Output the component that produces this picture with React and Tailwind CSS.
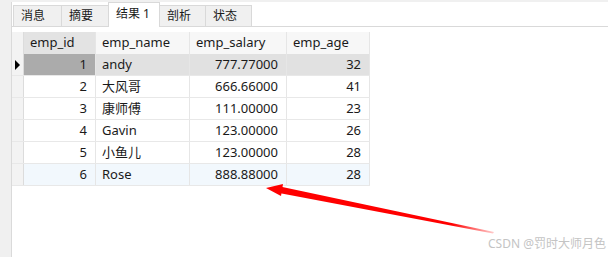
import React from "react";

const rows = [
  { id: 1, name: "andy", salary: "777.77000", age: 32 },
  { id: 2, name: "大风哥", salary: "666.66000", age: 41 },
  { id: 3, name: "康师傅", salary: "111.00000", age: 23 },
  { id: 4, name: "Gavin", salary: "123.00000", age: 26 },
  { id: 5, name: "小鱼儿", salary: "123.00000", age: 28 },
  { id: 6, name: "Rose", salary: "888.88000", age: 28 },
];

const tabs = [
  { label: "消息", w: "w-[49px]" },
  { label: "摘要", w: "w-[48px]" },
  { label: "结果 1", w: "w-[52px]", active: true },
  { label: "剖析", w: "w-[47px]" },
  { label: "状态", w: "w-[47px]" },
];

const App = () => {
  return (
    <div
      className="relative w-[608px] h-[257px] overflow-hidden bg-white flex flex-col text-[13px] text-[#1a1a1a]"
      style={{ fontFamily: '"Noto Sans", "Noto Sans CJK SC", sans-serif' }}
    >
      <div className="h-[2px] bg-[#f0f0f0] shrink-0" />
      <div className="flex flex-1">
        {/* left panel edge */}
        <div className="w-[12px] bg-[#f0f0f0] border-r border-[#dadada] shrink-0" />

        <div className="flex-1 flex flex-col">
          {/* tabs */}
          <div className="h-[25px] flex items-end pl-[1px] border-b border-[#d9d9d9]">
            {tabs.map((t, i) => (
              <div
                key={t.label}
                className={`${t.w} ${i > 0 ? "-ml-px" : ""} pl-[7px] border border-b-0 border-[#d9d9d9] text-[12px] leading-none ${
                  t.active
                    ? "h-[25px] bg-white -mb-px pt-[5px] relative z-10"
                    : "h-[21px] bg-[#f0f0f0] pt-[4px]"
                }`}
              >
                {t.label}
              </div>
            ))}
          </div>

          {/* table */}
          <div className="mt-[5px] flex flex-col w-[358px]">
            <div className="flex h-[22px]">
              <div className="w-[12px] bg-[#f3f3f3] border-r border-[#dcdcdc]" />
              <div className="w-[72px] bg-[#e3e3e3] border-r border-[#e6e6e6] pl-[6px] flex items-center">
                emp_id
              </div>
              <div className="w-[94px] bg-[#f7f7f7] border-r border-[#e6e6e6] pl-[6px] flex items-center">
                emp_name
              </div>
              <div className="w-[97px] bg-[#f7f7f7] border-r border-[#e6e6e6] pl-[6px] flex items-center">
                emp_salary
              </div>
              <div className="w-[83px] bg-[#f7f7f7] border-r border-[#e6e6e6] pl-[6px] flex items-center">
                emp_age
              </div>
            </div>
            {rows.map((r) => {
              const sel = r.id === 1;
              const last = r.id === 6;
              const rowBg = sel ? "bg-[#e1e1e1]" : last ? "bg-[#f2f8fd]" : "bg-white";
              return (
                <div key={r.id} className={`flex h-[22px] border-b border-[#e8e8e8] ${rowBg}`}>
                  <div className="w-[12px] bg-[#f3f3f3] border-r border-[#dcdcdc] flex items-center justify-center">
                    {sel && (
                      <svg width="7" height="10" viewBox="0 0 7 10">
                        <path d="M1 0 L6 5 L1 10 Z" fill="#000" />
                      </svg>
                    )}
                  </div>
                  <div
                    className={`w-[72px] border-r border-[#e6e6e6] pr-[8px] flex items-center justify-end ${
                      sel ? "bg-[#ababab]" : ""
                    }`}
                  >
                    {r.id}
                  </div>
                  <div className="w-[94px] border-r border-[#e6e6e6] pl-[6px] flex items-center">
                    {r.name}
                  </div>
                  <div className="w-[97px] border-r border-[#e6e6e6] pr-[8px] flex items-center justify-end">
                    {r.salary}
                  </div>
                  <div className="w-[83px] border-r border-[#e6e6e6] pr-[8px] flex items-center justify-end">
                    {r.age}
                  </div>
                </div>
              );
            })}
          </div>
        </div>
      </div>

      {/* red arrow annotation */}
      <svg className="absolute left-0 top-0" width="608" height="257" viewBox="0 0 608 257">
        <defs>
          <linearGradient id="fade" x1="282" y1="190" x2="494" y2="233" gradientUnits="userSpaceOnUse">
            <stop offset="0" stopColor="#ff0000" />
            <stop offset="0.8" stopColor="#ff0000" />
            <stop offset="1" stopColor="#ff0000" stopOpacity="0.2" />
          </linearGradient>
        </defs>
        <path d="M266 188 L283 184 L281 196 Z" fill="#ff0000" />
        <path d="M280 186.5 L494 232 L493 233.5 L279 193 Z" fill="url(#fade)" />
      </svg>

      <div className="absolute left-[488px] top-[238px] text-[12px] text-[#c4c4c4] leading-none">
        CSDN @罚时大师月色
      </div>
    </div>
  );
};

export default App;
